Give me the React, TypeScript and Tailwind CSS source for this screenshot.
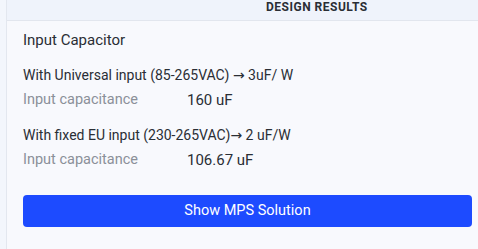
export default function App() {
  return (
    <div className="flex h-[249px] w-[478px] overflow-hidden bg-[#f3f6fc] font-['Roboto',sans-serif] text-[#2a2e35]">
      <div className="w-[7px] flex-none border-r border-[#e3e7ef]" />
      <div className="flex min-w-0 flex-1 flex-col bg-[#f8f9fd]">
        <div className="h-[21px] flex-none border-b border-[#e2e6ee] bg-[#eff3fb] pl-[259px]">
          <span className="block text-[12px] leading-[14px] font-bold tracking-[0.5px] text-[#2a2e35]">DESIGN RESULTS</span>
        </div>
        <div className="flex flex-col px-4">
          <div className="mt-[10px] text-[15px] leading-[18px]">Input Capacitor</div>
          <div className="mt-[17px] text-[14px] leading-[18px]">
            With Universal input (85-265VAC) <span className="font-['DejaVu_Sans',sans-serif]">→</span> 3uF/ W
          </div>
          <div className="mt-[7px] flex text-[15px] leading-[18px]">
            <span className="w-[164px] text-[14.5px] text-[#8b9099]">Input capacitance</span>
            <span>160 uF</span>
          </div>
          <div className="mt-[17px] text-[14px] leading-[18px]">
            With fixed EU input (230-265VAC)<span className="font-['DejaVu_Sans',sans-serif]">→</span> 2 uF/W
          </div>
          <div className="mt-[7px] flex text-[15px] leading-[18px]">
            <span className="w-[164px] text-[14.5px] text-[#8b9099]">Input capacitance</span>
            <span>106.67 uF</span>
          </div>
          <button className="mt-[26px] h-[32px] w-[449px] rounded-[4px] bg-[#1d4bff] text-[14.5px] text-white">
            Show MPS Solution
          </button>
        </div>
      </div>
    </div>
  );
}
